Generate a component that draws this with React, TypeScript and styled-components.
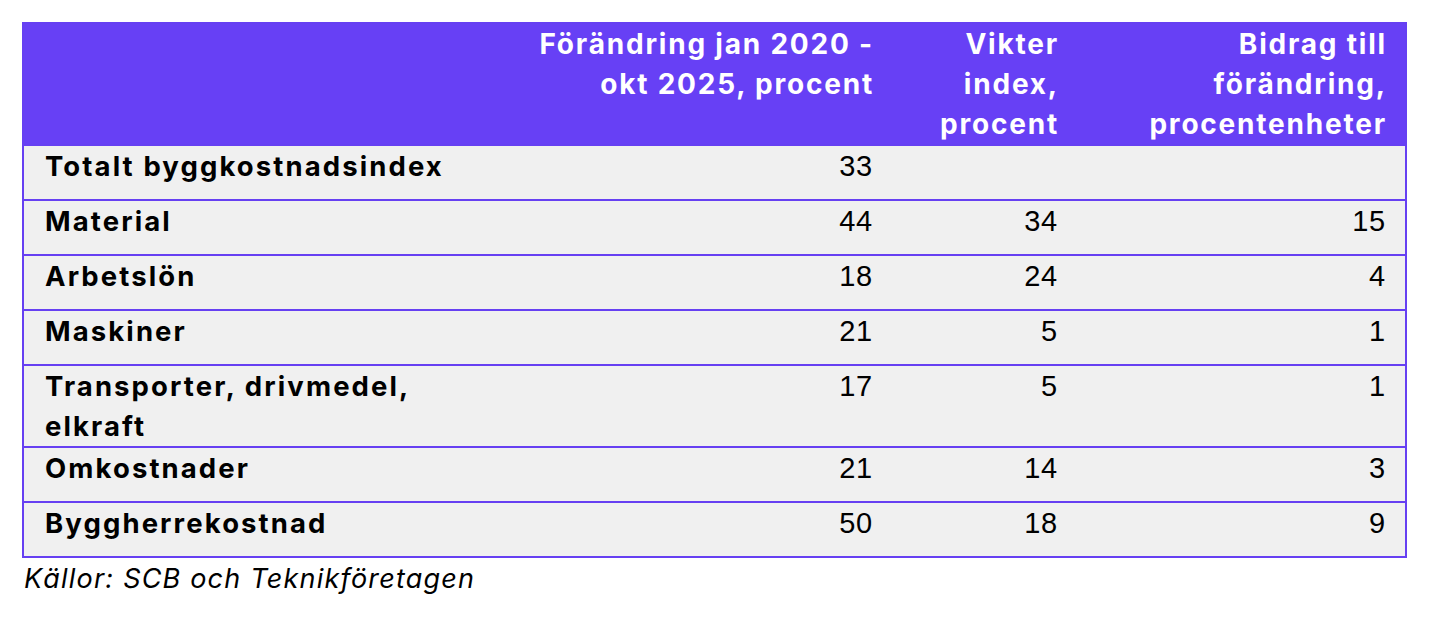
import React from "react";
import styled, { createGlobalStyle } from "styled-components";

type Row = {
    label: string;
    change: string;
    weight: string;
    contribution: string;
};

const rows: Row[] = [
    { label: "Totalt byggkostnadsindex", change: "33", weight: "", contribution: "" },
    { label: "Material", change: "44", weight: "34", contribution: "15" },
    { label: "Arbetslön", change: "18", weight: "24", contribution: "4" },
    { label: "Maskiner", change: "21", weight: "5", contribution: "1" },
    { label: "Transporter, drivmedel, elkraft", change: "17", weight: "5", contribution: "1" },
    { label: "Omkostnader", change: "21", weight: "14", contribution: "3" },
    { label: "Byggherrekostnad", change: "50", weight: "18", contribution: "9" },
];

const GlobalStyle = createGlobalStyle`
  html, body {
    margin: 0;
    padding: 0;
    background: #ffffff;
  }
`;

export default function App() {
    return (
        <Page>
            <GlobalStyle />
            <Table>
                <colgroup>
                    <col style={{ width: 468 }} />
                    <col style={{ width: 401 }} />
                    <col style={{ width: 185 }} />
                    <col style={{ width: 329 }} />
                </colgroup>
                <thead>
                    <tr>
                        <HeadCell />
                        <HeadCell>Förändring jan 2020 - okt 2025, procent</HeadCell>
                        <HeadCell>Vikter index, procent</HeadCell>
                        <HeadCell>Bidrag till förändring, procentenheter</HeadCell>
                    </tr>
                </thead>
                <tbody>
                    {rows.map((row) => (
                        <BodyRow key={row.label}>
                            <LabelCell>{row.label}</LabelCell>
                            <NumberCell>{row.change}</NumberCell>
                            <NumberCell>{row.weight}</NumberCell>
                            <NumberCell>{row.contribution}</NumberCell>
                        </BodyRow>
                    ))}
                </tbody>
            </Table>
            <Source>Källor: SCB och Teknikföretagen</Source>
        </Page>
    );
}

const Page = styled.div`
  padding: 22px 0 0 22px;
  font-family: Inter, "Liberation Sans", sans-serif;
`;

const Table = styled.table`
  width: 1383px;
  table-layout: fixed;
  border-collapse: collapse;
  border: 2px solid #6640f2;
`;

const HeadCell = styled.th`
  background-color: #6740f5;
  color: #ffffff;
  font-family: Inter, "Liberation Sans", sans-serif;
  font-size: 28px;
  font-weight: 700;
  line-height: 40px;
  letter-spacing: 1.8px;
  text-align: right;
  vertical-align: top;
  padding: 0 18px 0 23px;
`;

const BodyRow = styled.tr`
  background-color: #f0f0f0;
  border-top: 2px solid #6640f2;
`;

const LabelCell = styled.td`
  height: 53px;
  color: #000000;
  font-family: Inter, "Liberation Sans", sans-serif;
  font-size: 27.5px;
  font-weight: 700;
  line-height: 40px;
  letter-spacing: 2.1px;
  text-align: left;
  vertical-align: top;
  padding: 0 20px 0 21px;
`;

const NumberCell = styled.td`
  color: #000000;
  font-family: "Liberation Sans", Arial, sans-serif;
  font-size: 29px;
  line-height: 40px;
  letter-spacing: 0.8px;
  text-align: right;
  vertical-align: top;
  padding: 0 19px 0 23px;
`;

const Source = styled.div`
  padding: 5px 0 0 2px;
  font-family: Inter, "Liberation Sans", sans-serif;
  font-size: 27px;
  font-style: italic;
  line-height: 32px;
  letter-spacing: 1.2px;
  color: #000000;
`;
